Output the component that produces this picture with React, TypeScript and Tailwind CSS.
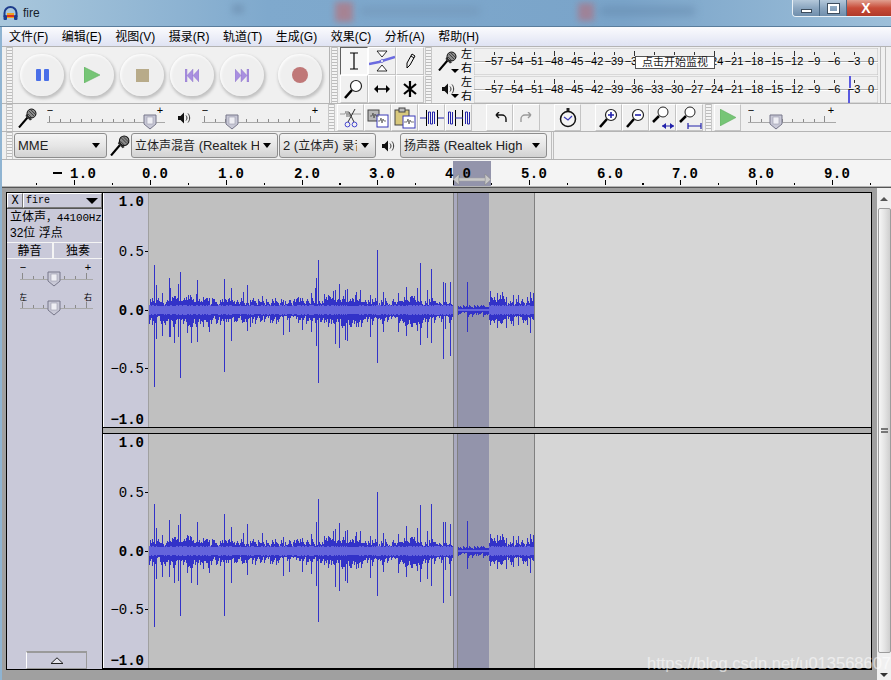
import React from "react";

const cjk = "font-['Liberation_Sans','Noto_Sans_CJK_SC',sans-serif]";
const mono = "font-['Liberation_Mono','Noto_Sans_CJK_SC',monospace]";

type Spike = [number, number, number];

const track1: Spike[] = [
  [154, 45, 77], [156, 25, 29], [162, 17, 26], [169, 32, 27], [170, 22, 27], [174, 14, 33], [178, 26, 27], [180, 38, 68],
  [187, 10, 23], [191, 13, 33], [196, 16, 17], [197, 30, 32], [203, 12, 17], [209, 12, 22], [224, 31, 62], [231, 22, 31],
  [243, 18, 12], [247, 25, 21], [250, 10, 17], [262, 14, 10], [283, 10, 25], [289, 10, 22], [298, 13, 13], [302, 12, 20],
  [311, 17, 22], [315, 22, 13], [316, 32, 36], [318, 50, 73], [324, 16, 13], [333, 19, 13], [335, 20, 34], [339, 26, 38],
  [345, 20, 30], [347, 21, 31], [356, 18, 17], [360, 20, 10], [370, 15, 27], [377, 60, 53], [383, 18, 22], [398, 17, 22],
  [406, 23, 26], [417, 22, 21], [420, 47, 35], [427, 20, 28], [431, 41, 33], [443, 28, 49], [445, 27, 19], [450, 28, 46],
  [467, 28, 22], [490, 19, 14], [497, 17, 18], [502, 18, 13], [506, 13, 18], [513, 15, 16], [518, 15, 15], [527, 13, 15], [530, 18, 23], [533, 17, 8],
];

const track2: Spike[] = [
  [154, 47, 76], [156, 23, 28], [162, 16, 26], [169, 31, 26], [174, 14, 32], [178, 26, 30], [180, 37, 65], [187, 16, 22],
  [191, 14, 32], [197, 29, 34], [203, 11, 18], [209, 11, 22], [224, 37, 65], [231, 24, 32], [243, 18, 12], [247, 27, 24],
  [262, 18, 9], [283, 14, 25], [289, 11, 21], [302, 13, 21], [311, 17, 23], [316, 29, 35], [318, 52, 71], [324, 15, 14],
  [333, 20, 12], [335, 22, 36], [339, 28, 40], [345, 20, 30], [347, 21, 32], [356, 19, 18], [360, 20, 11], [370, 15, 27],
  [377, 59, 45], [383, 18, 21], [398, 17, 22], [406, 25, 26], [417, 23, 20], [420, 46, 31], [427, 20, 28], [431, 47, 35],
  [443, 29, 52], [445, 29, 19], [450, 27, 45], [467, 30, 18], [490, 17, 14], [497, 16, 18], [502, 17, 13], [506, 13, 18],
  [513, 15, 16], [518, 15, 15], [527, 13, 15], [530, 17, 22], [533, 16, 8],
];

// same little generator every render so the noise stays put
function noise(seed: number) {
  let s = seed;
  return () => {
    s = (s * 1664525 + 1013904223) % 4294967296;
    return s / 4294967296;
  };
}

function wavePaths(spikes: Spike[], seed: number) {
  const r = noise(seed);
  const cy = 117;
  let peak = "";
  let rms = "";
  let prevUp = 0;
  let prevDn = 0;
  for (let x = 149; x < 534; x++) {
    if (x >= 453 && x < 458) continue;
    const quiet = x >= 458 && x < 489;
    const a = r();
    const b = r();
    const c = r();
    const bump = Math.sin(x / 17) * Math.sin(x / 41) > 0.25 ? 3 : 0;
    let up = quiet ? 2 + a * a * 4 : 5 + a * a * 7 + bump;
    let dn = quiet ? 2 + b * b * 5 : 6 + b * b * 9 + bump;
    up = Math.max(up, prevUp * 0.75);
    dn = Math.max(dn, prevDn * 0.75);
    prevUp = up;
    prevDn = dn;
    peak += `M${x - 149}.5 ${cy - Math.round(up)}V${cy + Math.round(dn)}`;
    const h = quiet ? 1 : 4 + Math.round(c);
    rms += `M${x - 149}.5 ${cy - h}V${cy + h}`;
  }
  for (const [x, up, dn] of spikes) {
    peak += `M${x - 149}.5 ${cy - up}V${cy + dn}`;
  }
  return { peak, rms };
}

function Waveform({ spikes, seed }: { spikes: Spike[]; seed: number }) {
  const { peak, rms } = wavePaths(spikes, seed);
  return (
    <div className="relative h-[234px] flex-1 bg-[#d6d6d6]">
      <div className="h-full w-[386px] border-r border-[#808080] bg-[#c0c0c0]" />
      <div className="absolute inset-y-0 left-[304px] w-[5px] border-x border-[#808080] bg-[#a9a9bf]" />
      <div className="absolute inset-y-0 left-[309px] w-[31px] bg-[#9394ab]" />
      <svg className="absolute inset-0" width="386" height="234" shapeRendering="crispEdges">
        <path d={peak} stroke="#3232c8" fill="none" />
        <path d={rms} stroke="#6464dc" fill="none" />
      </svg>
    </div>
  );
}

function Scale() {
  const rows: [string, number, boolean, boolean][] = [
    ["1.0", 8, true, false],
    ["0.5", 58, false, true],
    ["0.0", 117, true, true],
    ["−0.5", 175, false, true],
    ["−1.0", 226, true, false],
  ];
  return (
    <svg width="46" height="234" className={`shrink-0 border-l border-r border-l-white border-r-[#a0a0a0] bg-[#c9c9d9] ${mono}`}>
      {rows.map(([t, y, bold, tick]) => (
        <g key={t}>
          <text x="40" y={y + 5} textAnchor="end" fontSize="14" fontWeight={bold ? 700 : 400} fill="#000">{t}</text>
          {tick && <rect x="41" y={y} width="3" height="1" fill="#000" />}
        </g>
      ))}
    </svg>
  );
}

function Grip({ className = "" }: { className?: string }) {
  return (
    <div
      className={`w-[7px] shrink-0 border-x border-[#c8c8c8] bg-[repeating-linear-gradient(to_bottom,#bdbdbd_0,#bdbdbd_1px,#f4f4f4_1px,#f4f4f4_3px)] ${className}`}
    />
  );
}

function Round({ children, className = "" }: { children: React.ReactNode; className?: string }) {
  return (
    <div
      className={`flex h-[42px] w-[44px] shrink-0 items-center justify-center rounded-full bg-[#efefef] shadow-[1px_2px_3px_1px_#c2c2c2,inset_1px_1px_3px_#ffffff] ${className}`}
    >
      {children}
    </div>
  );
}

function Tool({ children, active = false, className = "" }: { children: React.ReactNode; active?: boolean; className?: string }) {
  return (
    <div
      className={`flex h-[27px] w-[27px] shrink-0 items-center justify-center border ${
        active ? "border-t-[#606060] border-l-[#606060] border-r-white border-b-white bg-[#f6f6f6]" : "border-t-white border-l-white border-r-[#c4c4c4] border-b-[#c4c4c4] bg-[#f0f0f0]"
      } ${className}`}
    >
      {children}
    </div>
  );
}

function Mic({ size = 20 }: { size?: number }) {
  return (
    <svg width={size} height={size} viewBox="0 0 20 20" className="shrink-0">
      <path d="M1 19.5 9.5 9.5" stroke="#000" strokeWidth="2" />
      <path d="M7.5 8 12 12.5 14 11.5 8.5 6Z" fill="#333" />
      <circle cx="13.5" cy="5.5" r="4.5" fill="#8a8a8a" stroke="#111" />
      <path d="M11 3 16 8M13 2l5 5M10 6l4 4" stroke="#222" strokeWidth=".7" />
    </svg>
  );
}

function Speaker() {
  return (
    <svg width="14" height="14" viewBox="0 0 14 14" className="shrink-0">
      <path d="M1 5h2.5L7 1.5v11L3.5 9H1Z" fill="#111" />
      <path d="M9 4.5c1.3 1.5 1.3 3.5 0 5M11 2.5c2.2 2.7 2.2 6.3 0 9" stroke="#333" strokeWidth="1" fill="none" />
    </svg>
  );
}

function Slider({ width, thumb, labels = ["−", "+"] }: { width: number; thumb: number; labels?: string[] }) {
  const ticks: number[] = [];
  for (let x = 2; x <= width - 2; x += 10.6) ticks.push(x);
  return (
    <svg width={width} height="26" className={`shrink-0 ${cjk}`}>
      <text x="3" y="9" textAnchor="middle" fontSize={labels[0] === "−" ? 11 : 8} fill="#000">{labels[0]}</text>
      <text x={width - 5} y="9" textAnchor="middle" fontSize={labels[1] === "+" ? 11 : 8} fill="#000">{labels[1]}</text>
      {ticks.map((x, i) => (
        <rect key={x} x={Math.round(x)} y={i === 0 || i === ticks.length - 1 ? 11 : 14} width="1" height={i === 0 || i === ticks.length - 1 ? 6 : 3} fill="#8a8a8a" />
      ))}
      <rect x="0" y="17" width={width} height="1" fill="#a8a8a8" />
      <path d={`M${thumb - 6} 10h12v9l-6 5-6-5Z`} fill="#c8c8d6" stroke="#77778a" />
      <rect x={thumb - 3} y="12" width="6" height="7" fill="#eeeef4" stroke="#9a9aac" strokeWidth=".6" />
    </svg>
  );
}

function Combo({ children, width, className = "" }: { children: React.ReactNode; width: string; className?: string }) {
  return (
    <div
      className={`flex h-[25px] shrink-0 items-center justify-between rounded-[3px] border border-[#8d8d8d] bg-[linear-gradient(#f4f4f4,#e6e6e6_50%,#d2d2d2)] pl-[3px] pr-[6px] ${width} ${className}`}
    >
      <span className="overflow-hidden whitespace-pre text-[13px] text-[#222]">{children}</span>
      <span className="ml-1 h-0 w-0 shrink-0 border-x-[4px] border-t-[5px] border-x-transparent border-t-black" />
    </div>
  );
}

function MeterRow({ monitor = false, peaks = false, icon }: { monitor?: boolean; peaks?: boolean; icon: React.ReactNode }) {
  const values = [57, 54, 51, 48, 45, 42, 39, 36, 33, 30, 27, 24, 21, 18, 15, 12, 9, 6, 3];
  // the monitor hint box covers these labels in the top meter
  const labels = monitor ? values.filter((v) => v !== 33 && v !== 30 && v !== 27) : values;
  return (
    <div className="flex h-[28px] items-center">
      <div className="relative ml-[2px] flex w-[24px] items-center justify-center">
        {icon}
        <span className="absolute bottom-[-2px] right-[1px] h-0 w-0 border-x-[4px] border-t-[4px] border-x-transparent border-t-black" />
      </div>
      <div className="ml-[1px] flex w-[13px] flex-col text-[11px] leading-[14px] text-black">
        <span>左</span>
        <span>右</span>
      </div>
      <svg width="404" height="27" viewBox="474 0 404 27" className={`shrink-0 ${cjk}`}>
        <rect x="474" y="0" width="404" height="27" fill="#f0f0f0" stroke="#c0c0c0" />
        <rect x="474" y="13" width="404" height="1" fill="#aeaeae" />
        <rect x="474" y="14" width="404" height="1" fill="#ffffff" />
        {values.map((v) => {
          const x = 874 - (v * 20) / 3;
          return <rect key={v} x={x} y={v % 12 === 0 ? 3 : 4} width="1" height={v % 12 === 0 ? 5 : 3} fill="#333" />;
        })}
        {labels.map((v) => {
          const x = 874 - (v * 20) / 3;
          return (
            <text key={v} x={x} y="17" textAnchor="middle" fontSize="11" fill="#000">
              {`−${v}`}
            </text>
          );
        })}
        <text x="871" y="17" textAnchor="middle" fontSize="11" fill="#000">0</text>
        {peaks && <rect x="849" y="0" width="2" height="12" fill="#5a5ae0" />}
        {peaks && <rect x="848" y="14" width="2" height="13" fill="#5a5ae0" />}
        {monitor && (
          <g>
            <rect x="635.5" y="8.5" width="79" height="12" fill="#fff" stroke="#555" />
            <text x="675" y="18" textAnchor="middle" fontSize="11" fill="#222" className="font-['Noto_Sans_CJK_SC',sans-serif]">点击开始监视</text>
          </g>
        )}
      </svg>
    </div>
  );
}

function Ruler() {
  const majors = [-1, 0, 1, 2, 3, 4, 5, 6, 7, 8, 9];
  const step = 75.75;
  return (
    <svg width="889" height="26" viewBox="2 0 889 26" className={`block bg-[#f4f4f4] ${mono}`}>
      <rect x="453" y="1" width="38" height="25" fill="#9394ab" />
      {majors.map((m) => {
        const x = Math.round(150 + m * step);
        return (
          <g key={m}>
            <rect x={x} y="20" width="1" height="5" fill="#000" />
            <rect x={Math.round(x + step / 2)} y="23" width="1" height="2" fill="#000" />
            <rect x={Math.round(x - step / 2)} y="23" width="1" height="2" fill="#000" />
            <text x={m < 0 ? x - 4 : x - 8} y="18" fontSize="14" fontWeight="700" letterSpacing=".4" fill="#000">{`${m < 0 ? -m : m}.0`}</text>
          </g>
        );
      })}
      <rect x="53" y="12" width="9" height="2" fill="#000" />
      <path d="M453 19.5 459 14v11ZM491 19.5 485 14v11Z" fill="#c8c8c8" stroke="#8a8a8a" strokeWidth=".6" />
      <rect x="459" y="18" width="26" height="3" fill="#c8c8c8" stroke="#a0a0a0" strokeWidth=".5" />
    </svg>
  );
}

function Scrollbar() {
  return (
    <div className="flex w-[14px] shrink-0 flex-col items-center bg-[#f0f0f0]">
      <div className="flex h-[20px] w-full items-center justify-center pt-[2px]">
        <span className="h-0 w-0 border-x-[4px] border-b-[4px] border-x-transparent border-b-[#555]" />
      </div>
      <div className="flex h-[445px] w-[13px] items-center justify-center rounded-[2px] border border-[#9c9c9c] bg-[linear-gradient(90deg,#f6f6f6,#e4e4e4_50%,#cfcfcf)]">
        <div className="h-[5px] w-[7px] border-y border-[#777] bg-[linear-gradient(#777_1px,transparent_1px)] bg-[length:100%_2px]" />
      </div>
      <div className="flex flex-1 items-end justify-center pb-[3px]">
        <span className="h-0 w-0 border-x-[4px] border-t-[4px] border-x-transparent border-t-[#333]" />
      </div>
    </div>
  );
}

function TrackPanel() {
  return (
    <div className="relative flex h-[476px] w-[96px] shrink-0 flex-col border-r border-black bg-[#c9c9d9] text-[12px] text-black">
      <div className="flex h-[16px] border-b border-[#555]">
        <div className={`flex w-[16px] items-center justify-center border border-t-white border-l-white border-r-[#777] border-b-[#777] text-[12px] leading-none ${mono}`}>X</div>
        <div className={`flex flex-1 items-center justify-between border border-t-white border-l-white border-r-[#777] border-b-[#777] pl-[2px] pr-[3px] text-[10px] ${mono}`}>
          <span>fire</span>
          <span className="h-0 w-0 border-x-[6px] border-t-[6px] border-x-transparent border-t-black" />
        </div>
      </div>
      <div className="px-[3px] pt-[1px] leading-[15px]">
        <div className={`whitespace-pre text-[12px] ${cjk}`}>立体声<span className={`text-[11px] tracking-[-.2px] ${mono}`}>，44100Hz</span></div>
        <div className="whitespace-pre">32位 浮点</div>
      </div>
      <div className="mt-[1px] flex h-[17px] border-y border-[#f4f4f4]">
        <div className="flex w-[47px] items-center justify-center border-r-2 border-[#f4f4f4]">静音</div>
        <div className="flex flex-1 items-center justify-center">独奏</div>
      </div>
      <div className="flex flex-col gap-[3px] pl-[13px] pt-[3px]">
        <Slider width={73} thumb={34} />
        <Slider width={73} thumb={34} labels={["左", "右"]} />
      </div>
      <div className="absolute bottom-0 left-[19px] flex h-[18px] w-[61px] items-center justify-center border border-t-[2px] border-[#9a9a9a] border-l-white">
        <svg width="14" height="7"><path d="M1 6.5h12L7 .8Z" fill="#e4e4ec" stroke="#222" /></svg>
      </div>
    </div>
  );
}

function Tracks() {
  return (
    <div className="flex h-[478px] w-[866px] border border-black bg-black">
      <TrackPanel />
      <div className="flex flex-1 flex-col">
        <div className="flex">
          <Scale />
          <Waveform spikes={track1} seed={7} />
        </div>
        <div className="h-[7px] border-y border-black bg-[#b0b0b0]" />
        <div className="flex">
          <Scale />
          <Waveform spikes={track2} seed={7} />
        </div>
      </div>
    </div>
  );
}

function Magnifier({ children, h = 20 }: { children?: React.ReactNode; h?: number }) {
  return (
    <svg width="22" height={h} viewBox={`0 0 22 ${h}`}>
      <path d="M2 19 9 11" stroke="#000" strokeWidth="2.5" />
      <circle cx="13" cy="7" r="5.5" fill="#fff" stroke="#222" strokeWidth="1.2" />
      {children}
    </svg>
  );
}

export default function App() {
  return (
    <div className={`relative h-[680px] w-[891px] overflow-hidden bg-[#8fb4d2] ${cjk}`}>
      {/* Title bar */}
      <div className="relative flex h-[27px] items-center border-b border-[#5a7d9c] bg-[linear-gradient(90deg,#a9c7dc,#7fa9cd_30%,#7aa4c9_70%,#9dbfd9)] pl-[3px]">
        <svg width="15" height="15" viewBox="0 0 15 15" className="shrink-0">
          <path d="M1.5 11V7a6 6 0 0 1 12 0v4" fill="none" stroke="#1d3c8c" strokeWidth="2" />
          <rect x="4" y="7" width="7" height="5" fill="#f0a020" />
          <rect x="4" y="9" width="7" height="2" fill="#d83020" />
          <rect x="0.5" y="9" width="3.5" height="5" rx="1" fill="#1d3c8c" />
          <rect x="11" y="9" width="3.5" height="5" rx="1" fill="#1d3c8c" />
        </svg>
        <span className="ml-[5px] text-[12px] text-[#15202b]">fire</span>
        <div className="absolute left-[335px] top-[2px] h-[20px] w-[18px] bg-[#b07a86] opacity-80 blur-[3px]" />
        <div className="absolute left-[360px] top-[7px] h-[8px] w-[120px] bg-[#6f8fb0] opacity-50 blur-[4px]" />
        <div className="absolute left-[578px] top-[3px] h-[18px] w-[16px] bg-[#a87a8c] opacity-80 blur-[3px]" />
        <div className="absolute left-[600px] top-[7px] h-[8px] w-[95px] bg-[#5f82a6] opacity-50 blur-[4px]" />
        <div className="absolute left-[232px] top-[4px] h-[10px] w-[12px] bg-[#6d8fb0] opacity-60 blur-[3px]" />
        <div className="absolute right-0 top-0 flex h-[17px] w-[99px] overflow-hidden rounded-bl-[4px] border-b border-l border-[#e8f0f6]">
          <div className="flex w-[27px] items-center justify-center border-r border-[#4c6a86] bg-[linear-gradient(#b4c8da,#8ba6c0_50%,#6f8eac)]">
            <span className="mt-[5px] h-[4px] w-[11px] border border-[#3d4d5d] bg-white" />
          </div>
          <div className="flex w-[27px] items-center justify-center border-r border-[#4c6a86] bg-[linear-gradient(#b4c8da,#8ba6c0_50%,#6f8eac)]">
            <span className="h-[9px] w-[11px] border-2 border-white outline outline-1 outline-[#3d4d5d]" />
          </div>
          <div className="flex flex-1 items-center justify-center bg-[linear-gradient(#e0a090,#c84c38_50%,#b03a2a)] pr-[6px]">
            <span className="text-[14px] font-bold leading-none text-white">X</span>
          </div>
        </div>
      </div>

      <div className="ml-[2px] flex flex-col bg-[#f0f0f0]">
        {/* Menu */}
        <div className="flex h-[19px] items-center gap-[13.5px] bg-[linear-gradient(#fbfbfd,#dfe3f3)] pl-[7px] text-[12px] text-black">
          {["文件(F)", "编辑(E)", "视图(V)", "摄录(R)", "轨道(T)", "生成(G)", "效果(C)", "分析(A)", "帮助(H)"].map((m) => (
            <span key={m} className="whitespace-pre">{m}</span>
          ))}
        </div>

        {/* Transport + tools + meters */}
        <div className="flex h-[57px] items-center border-t border-[#b4b4b4] pl-[4px]">
          <Grip className="h-full" />
          <div className="ml-[7px] flex items-center gap-[6px]">
            <Round>
              <div className="flex gap-[3px]">
                <span className="h-[12px] w-[5px] rounded-[1px] bg-[#4a6fe8]" />
                <span className="h-[12px] w-[5px] rounded-[1px] bg-[#4a6fe8]" />
              </div>
            </Round>
            <Round>
              <svg width="16" height="16"><path d="M0 0 16 8 0 16Z" fill="#76c576" stroke="#5aa85a" strokeWidth=".5" /></svg>
            </Round>
            <Round>
              <span className="h-[13px] w-[13px] bg-[#b8ab8a]" />
            </Round>
            <Round>
              <svg width="14" height="13"><path d="M0 0h2v13H0ZM8 0v13L2 6.5ZM14 0v13L8 6.5Z" fill="#a98fe0" stroke="#8f76c8" strokeWidth=".4" /></svg>
            </Round>
            <Round>
              <svg width="14" height="13"><path d="M14 0h-2v13h2ZM6 0v13l6-6.5ZM0 0v13l6-6.5Z" fill="#a98fe0" stroke="#8f76c8" strokeWidth=".4" /></svg>
            </Round>
            <Round className="ml-[8px]">
              <span className="h-[16px] w-[16px] rounded-full bg-[#c07878]" />
            </Round>
          </div>
          <div className="ml-[7px] h-full w-px bg-[#b4b4b4]" />
          <Grip className="ml-[1px] h-full" />
          <div className="ml-[2px] grid grid-cols-[28px_28px_28px] grid-rows-[28px_28px]">
            <Tool active className="h-[28px] w-[28px]">
              <svg width="12" height="18"><path d="M2 1h8M6 1v16M2 17h8" stroke="#000" strokeWidth="1.2" fill="none" /></svg>
            </Tool>
            <Tool className="h-[28px] w-[28px]">
              <svg width="26" height="22">
                <path d="M8 1h10l-5 6ZM8 21h10l-5-6Z" fill="#fff" stroke="#000" strokeWidth=".8" />
                <path d="M0 14 10 12 16 10 26 7" stroke="#6a6ae0" strokeWidth="2.5" fill="none" />
                <circle cx="13" cy="11" r="1.5" fill="#fff" stroke="#4a4ac0" strokeWidth=".6" />
              </svg>
            </Tool>
            <Tool className="h-[28px] w-[28px]">
              <svg width="14" height="18"><path d="M4 11 9 2l3 2-5 9-3 3Z" fill="#eee" stroke="#000" /><path d="M8 4l3 2" stroke="#000" /></svg>
            </Tool>
            <Tool className="h-[28px] w-[28px]">
              <Magnifier />
            </Tool>
            <Tool className="h-[28px] w-[28px]">
              <svg width="16" height="8"><path d="M3 4h10" stroke="#000" strokeWidth="1.5" /><path d="M0 4 4 0v8ZM16 4l-4-4v8Z" fill="#000" /></svg>
            </Tool>
            <Tool className="h-[28px] w-[28px]">
              <svg width="14" height="16"><path d="M7 0v16M1 3l12 10M13 3 1 13" stroke="#000" strokeWidth="2.2" /></svg>
            </Tool>
          </div>
          <div className="ml-[1px] flex h-full flex-col gap-[1px]">
            <Grip className="flex-1" />
            <Grip className="flex-1" />
          </div>
          <div className="ml-[2px] flex w-[445px] flex-col">
            <MeterRow monitor icon={<Mic />} />
            <MeterRow peaks icon={<Speaker />} />
          </div>
          <div className="ml-[1px] h-full w-[6px] border-x border-[#bdbdbd]" />
        </div>

        {/* Mixer + edit toolbar */}
        <div className="flex h-[28px] items-center border-t border-[#b4b4b4] pl-[4px]">
          <Grip className="h-full" />
          <div className="ml-[5px]"><Mic /></div>
          <div className="ml-[9px]"><Slider width={118} thumb={103} /></div>
          <div className="ml-[12px]"><Speaker /></div>
          <div className="ml-[11px]"><Slider width={118} thumb={30} /></div>
          <Grip className="ml-[8px] h-full" />
          <div className="ml-[2px] flex">
            <Tool>
              <svg width="22" height="22">
                <path d="M0 7h5l1-3 1 6 1-6 1 6 1-3h11" stroke="#888" strokeWidth=".8" fill="none" />
                <path d="M15 2 8 15M9 5l5 10" stroke="#333" strokeWidth="1" />
                <circle cx="7.5" cy="17.5" r="2.4" fill="none" stroke="#4646d0" strokeWidth="1" />
                <circle cx="14.5" cy="17.5" r="2.4" fill="none" stroke="#4646d0" strokeWidth="1" />
              </svg>
            </Tool>
            <Tool>
              <svg width="22" height="20">
                <rect x="1" y="2" width="11" height="11" fill="#b8b8b8" stroke="#444" />
                <rect x="10" y="7" width="11" height="12" fill="#fff" stroke="#3a3ab8" />
                <path d="M3 8h2l1-3 1 5 1-4 1 2h3M11 13h2l1-3 1 5 1-4 1 2h2" stroke="#444" strokeWidth=".7" fill="none" />
              </svg>
            </Tool>
            <Tool>
              <svg width="22" height="22">
                <rect x="1" y="3" width="14" height="15" fill="#d8c87c" stroke="#444" />
                <rect x="5" y="1" width="6" height="4" fill="#bbb" stroke="#444" />
                <rect x="9" y="9" width="12" height="12" fill="#fff" stroke="#3a3ab8" />
                <path d="M10 15h3l1-3 1 5 1-4 1 2h3" stroke="#444" strokeWidth=".7" fill="none" />
              </svg>
            </Tool>
            <Tool>
              <svg width="24" height="18">
                <path d="M0 9h6M18 9h6" stroke="#2222aa" />
                <path d="M6.5 1v16M17.5 1v16" stroke="#000" />
                <path d="M8.5 3v12M10.5 3v12M12.5 3v12M14.5 3v12M8.5 3h2M12.5 3h2M10.5 15h2" fill="none" stroke="#2222aa" />
              </svg>
            </Tool>
            <Tool>
              <svg width="24" height="18">
                <path d="M8.5 1v16M15.5 1v16" stroke="#000" />
                <path d="M8 9h8" stroke="#2222aa" />
                <path d="M1.5 3v12M3.5 3v12M5.5 3v12M1.5 3h2M3.5 15h2M18.5 3v12M20.5 3v12M22.5 3v12M18.5 3h2M20.5 15h2" fill="none" stroke="#2222aa" />
              </svg>
            </Tool>
          </div>
          <div className="ml-[14px] flex">
            <Tool>
              <svg width="16" height="12"><path d="M4 3h6a4 4 0 0 1 4 4v3M4 3l3-3M4 3l3 3" fill="none" stroke="#111" strokeWidth="1.4" /></svg>
            </Tool>
            <Tool>
              <svg width="16" height="12"><path d="M12 3H6a4 4 0 0 0-4 4v3M12 3 9 0M12 3 9 6" fill="none" stroke="#9a9a9a" strokeWidth="1.4" /></svg>
            </Tool>
          </div>
          <div className="ml-[14px]">
            <Tool>
              <svg width="18" height="20">
                <rect x="7.5" y="0" width="3" height="3" fill="#222" />
                <circle cx="9" cy="11" r="7.5" fill="#f4f4f4" stroke="#111" strokeWidth="1.5" />
                <path d="M5 9l4 3 4-4" fill="none" stroke="#3a3ab8" strokeWidth="1.2" />
              </svg>
            </Tool>
          </div>
          <div className="ml-[14px] flex">
            <Tool>
              <Magnifier><path d="M10 7h6M13 4v6" stroke="#2222aa" strokeWidth="1.6" /></Magnifier>
            </Tool>
            <Tool>
              <Magnifier><path d="M10 7h6" stroke="#2222aa" strokeWidth="1.6" /></Magnifier>
            </Tool>
            <Tool>
              <svg width="24" height="24">
                <path d="M2 16 8 10" stroke="#000" strokeWidth="2.5" />
                <circle cx="12" cy="6" r="5" fill="#fff" stroke="#222" />
                <path d="M11 20h12" stroke="#2222aa" /><path d="M11 20l4-3v6ZM23 20l-4-3v6Z" fill="#2222aa" />
              </svg>
            </Tool>
            <Tool>
              <svg width="24" height="24">
                <path d="M2 16 8 10" stroke="#000" strokeWidth="2.5" />
                <circle cx="12" cy="6" r="5" fill="#fff" stroke="#222" />
                <path d="M10 20h13M10 17v6M23 17v6" stroke="#2222aa" strokeWidth="1.2" />
              </svg>
            </Tool>
          </div>
          <Grip className="ml-[2px] h-full" />
          <div className="ml-[2px]">
            <Tool>
              <svg width="16" height="17"><path d="M0 0 16 8.5 0 17Z" fill="#76c576" stroke="#5aa85a" strokeWidth=".5" /></svg>
            </Tool>
          </div>
          <div className="ml-[7px]"><Slider width={88} thumb={28} /></div>
        </div>

        {/* Device toolbar */}
        <div className="flex h-[28px] items-center border-t border-[#b4b4b4] pl-[4px]">
          <Grip className="h-full" />
          <Combo width="w-[93px]" className="ml-[1px]">MME</Combo>
          <div className="ml-[3px]"><Mic size={21} /></div>
          <Combo width="w-[147px]">
            <span className="text-[12px]">立体声混音</span> (Realtek H
          </Combo>
          <Combo width="w-[97px]" className="ml-[1px]">
            2 (<span className="text-[12px]">立体声</span>) <span className="text-[12px]">录音</span>
          </Combo>
          <div className="ml-[5px]"><Speaker /></div>
          <Combo width="w-[147px]" className="ml-[5px]">
            <span className="text-[12px]">扬声器</span> (Realtek High
          </Combo>
          <div className="ml-[4px] h-full w-[3px] border-x border-[#bdbdbd]" />
        </div>

        <div className="border-y border-[#b4b4b4]">
          <Ruler />
        </div>

        {/* Tracks */}
        <div className="flex h-[493px] border-t border-[#555] bg-[#a0a0a0]">
          <div className="w-[875px] shrink-0 pl-[4px] pt-[4px]">
            <Tracks />
          </div>
          <Scrollbar />
        </div>
      </div>

      <span className="absolute left-[647px] top-[651px] whitespace-pre font-['Liberation_Sans',sans-serif] text-[16.5px] text-white/55">
        https://blog.csdn.net/u013568607
      </span>
    </div>
  );
}
